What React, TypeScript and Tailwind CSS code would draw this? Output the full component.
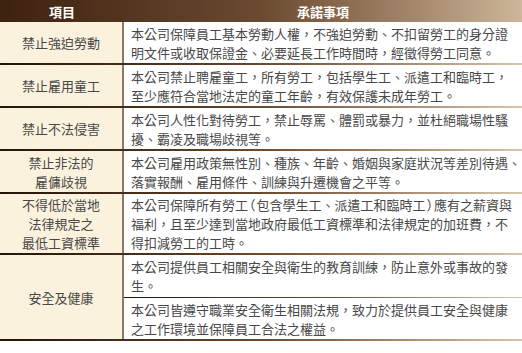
import React from "react";

const Sep = ({ h = "h-[2px]" }: { h?: string }) => (
  <div className={`${h} w-full bg-gradient-to-r from-[#24140a] via-[#6b4a2e] to-[#d8c6ae]`} />
);

const Paren = ({ c }: { c: string }) => (
  <span className="[font-feature-settings:'halt'] mx-[1px]">{c}</span>
);

interface Row {
  item: React.ReactNode;
  h: string;
  lines: React.ReactNode[];
}

const rows: Row[] = [
  {
    item: "禁止強迫勞動",
    h: "h-[41px]",
    lines: [
      "本公司保障員工基本勞動人權，不強迫勞動、不扣留勞工的身分證",
      "明文件或收取保證金、必要延長工作時間時，經徵得勞工同意。",
    ],
  },
  {
    item: "禁止雇用童工",
    h: "h-[41px]",
    lines: [
      "本公司禁止聘雇童工，所有勞工，包括學生工、派遣工和臨時工，",
      "至少應符合當地法定的童工年齡，有效保護未成年勞工。",
    ],
  },
  {
    item: "禁止不法侵害",
    h: "h-[41px]",
    lines: [
      "本公司人性化對待勞工，禁止辱罵、體罰或暴力，並杜絕職場性騷",
      "擾、霸凌及職場歧視等。",
    ],
  },
  {
    item: (
      <>
        禁止非法的
        <br />
        雇傭歧視
      </>
    ),
    h: "h-[41px]",
    lines: [
      "本公司雇用政策無性別、種族、年齡、婚姻與家庭狀況等差別待遇、",
      "落實報酬、雇用條件、訓練與升遷機會之平等。",
    ],
  },
  {
    item: (
      <>
        不得低於當地
        <br />
        法律規定之
        <br />
        最低工資標準
      </>
    ),
    h: "h-[59px]",
    lines: [
      <>
        本公司保障所有勞工
        <Paren c="（" />
        包含學生工、派遣工和臨時工
        <Paren c="）" />
        應有之薪資與
      </>,
      "福利，且至少達到當地政府最低工資標準和法律規定的加班費，不",
      "得扣減勞工的工時。",
    ],
  },
];

const Lines = ({ lines }: { lines: React.ReactNode[] }) => (
  <div className="flex flex-col pl-[7px]">
    {lines.map((l, i) => (
      <div key={i} className="whitespace-nowrap">
        {l}
      </div>
    ))}
  </div>
);

export default function App() {
  return (
    <div
      className="w-[522px] h-[353px] bg-white text-[13px] leading-[19px] text-[#484848] overflow-hidden"
      style={{ fontFamily: '"Noto Sans CJK TC", "Noto Sans", sans-serif' }}
    >
      <div className="flex h-[22px] items-center bg-gradient-to-r from-[#3e2210] via-[#6b4a30] to-[#cdb699] text-white font-bold">
        <div className="w-[124px] text-center">項目</div>
        <div className="flex-1 text-center">承諾事項</div>
      </div>

      {rows.map((r, i) => (
        <React.Fragment key={i}>
          <div className={`flex ${r.h}`}>
            <div className="w-[122px] shrink-0 bg-[#fbf2dd] flex items-center justify-center text-center">
              <div>{r.item}</div>
            </div>
            <div className="w-[2px] shrink-0 bg-[#8c7a68]" />
            <div className="flex-1 flex items-center">
              <Lines lines={r.lines} />
            </div>
          </div>
          <Sep />
        </React.Fragment>
      ))}

      <div className="flex">
        <div className="w-[122px] shrink-0 bg-[#fbf2dd] flex items-center justify-center">
          安全及健康
        </div>
        <div className="w-[2px] shrink-0 bg-[#8c7a68]" />
        <div className="flex-1 flex flex-col">
          <div className="h-[42px] flex items-center">
            <Lines
              lines={[
                "本公司提供員工相關安全與衛生的教育訓練，防止意外或事故的發",
                "生。",
              ]}
            />
          </div>
          <Sep h="h-px" />
          <div className="h-[41px] flex items-center">
            <Lines
              lines={[
                "本公司皆遵守職業安全衛生相關法規，致力於提供員工安全與健康",
                "之工作環境並保障員工合法之權益。",
              ]}
            />
          </div>
        </div>
      </div>
      <Sep />
    </div>
  );
}
